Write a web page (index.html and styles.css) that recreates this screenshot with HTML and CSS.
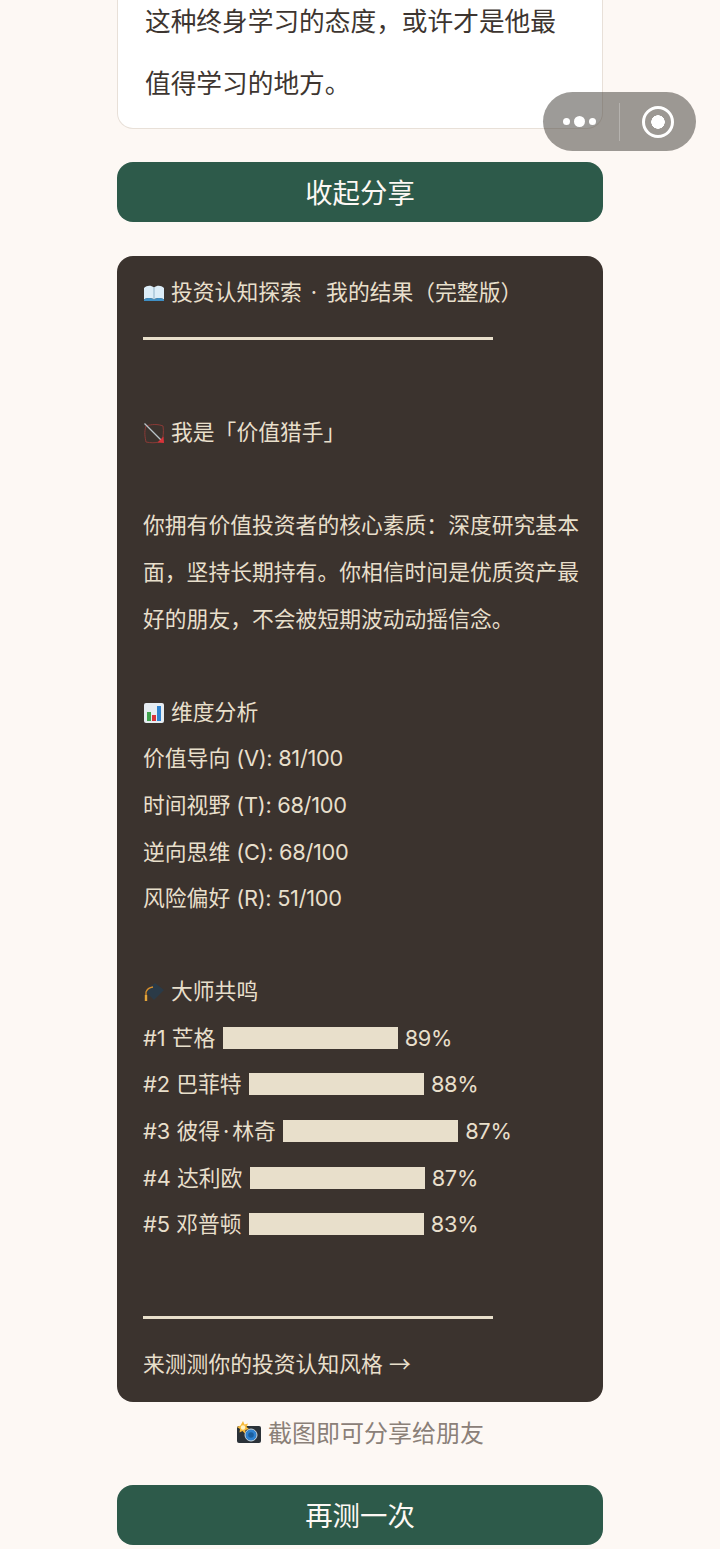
FILE: index.html
```html
<!DOCTYPE html>
<html lang="zh-CN">
<head>
<meta charset="utf-8">
<title>投资认知探索</title>
<link rel="stylesheet" href="styles.css">
</head>
<body>
<main class="page">
  <section class="article">
    <p>这种终身学习的态度&#xFF0C;或许才是他最</p>
    <p>值得学习的地方。</p>
  </section>
  <button class="btn btn-collapse">收起分享</button>
  <section class="result">
    <div class="line"><svg class="emoji" viewBox="0 0 22 22"><path d="M1 6C4 3 8 3 11 5.500 14 3 18 3 21 6V17.500C18 15.500 14 15.500 11 17.500 8 15.500 4 15.500 1 17.500Z" fill="#dcedf8"/><path d="M1 17.500C4 15.500 8 15.500 11 17.500 14 15.500 18 15.500 21 17.500V19H1Z" fill="#3f8fc4"/><path d="M11 5.500V17.500" stroke="#8fb3c9" stroke-width="1"/></svg>投资认知探索<span class="mid">·</span>我的结果&#xFF08;完整版&#xFF09;</div>
    <div class="line"><span class="rule"></span></div>
    <div class="line"></div>
    <div class="line"><svg class="emoji" viewBox="0 0 22 22"><path d="M3 4C9 2 15 2 20 4 21 10 20 15 19 19M3 4C1 10 2 15 3 20 8 21 12 21 16 20" fill="none" stroke="#8a3a36" stroke-width="1"/><path d="M1.500 1.500L18 18" stroke="#b9c4c9" stroke-width="1.300"/><path d="M14.500 20.500L21 21 20.500 14.500Z" fill="#d8343a"/></svg>我是「价值猎手」</div>
    <div class="line"></div>
    <div class="line">你拥有价值投资者的核心素质&#xFF1A;深度研究基本</div>
    <div class="line">面&#xFF0C;坚持长期持有。你相信时间是优质资产最</div>
    <div class="line">好的朋友&#xFF0C;不会被短期波动动摇信念。</div>
    <div class="line"></div>
    <div class="line"><svg class="emoji" viewBox="0 0 22 22"><rect x="1" y="1" width="20" height="20" rx="2" fill="#e6edf2"/><rect x="4" y="10" width="4" height="9" fill="#3fa34d"/><rect x="9" y="13" width="4" height="6" fill="#d8343a"/><rect x="14" y="4" width="4" height="15" fill="#2f83d0"/></svg>维度分析</div>
    <div class="line">价值导向 <span class="en">(V): 81/100</span></div>
    <div class="line">时间视野 <span class="en">(T): 68/100</span></div>
    <div class="line">逆向思维 <span class="en">(C): 68/100</span></div>
    <div class="line">风险偏好 <span class="en">(R): 51/100</span></div>
    <div class="line"></div>
    <div class="line"><svg class="emoji" viewBox="0 0 22 22"><path d="M12 2L21 9 11 19 2 10Z" fill="#2a3a47"/><path d="M3 20V11C4 8 7 6.500 10 6" fill="none" stroke="#d98f2b" stroke-width="1.300"/><rect x="1.800" y="14" width="2.400" height="6" fill="#e5a63a"/></svg>大师共鸣</div>
    <div class="line">#1 芒格 <span class="bar"></span> <span class="en">89%</span></div>
    <div class="line">#2 巴菲特 <span class="bar"></span> <span class="en">88%</span></div>
    <div class="line">#3 彼得<span class="mid-name">·</span>林奇 <span class="bar"></span> <span class="en">87%</span></div>
    <div class="line">#4 达利欧 <span class="bar"></span> <span class="en">87%</span></div>
    <div class="line">#5 邓普顿 <span class="bar"></span> <span class="en">83%</span></div>
    <div class="line"></div>
    <div class="line"><span class="rule"></span></div>
    <div class="line">来测测你的投资认知风格 <span class="arrow">→</span></div>
  </section>
  <p class="hint"><svg class="emoji-cam" viewBox="0 0 26 24"><rect x="1" y="5" width="24" height="17" rx="2" fill="#2b3238"/><circle cx="15" cy="14" r="6" fill="#2f83d0" stroke="#c9d3da" stroke-width="1"/><circle cx="15" cy="14" r="2.800" fill="#1b5f9e"/><path d="M7 0L8.500 3.500 12 2.500 10.500 6 13 8 9.500 9 9 12.500 6.500 10 3.500 11.500 4 8 1 6 4.500 4.500Z" fill="#f6b93b"/><circle cx="7" cy="6.500" r="2.200" fill="#fff3c4"/></svg>截图即可分享给朋友</p>
  <button class="btn btn-retry">再测一次</button>
</main>
<aside class="capsule">
  <span class="dots"><i class="dot"></i><i class="dot dot-mid"></i><i class="dot"></i></span>
  <span class="sep"></span>
  <span class="target"></span>
</aside>
</body>
</html>
```

FILE: styles.css
```css
* { box-sizing: border-box; }
html, body { margin: 0; padding: 0; }
body {
  height: 1549px;
  overflow: hidden;
  background: #fdf8f4;
  font-family: Inter, "Noto Sans CJK SC", sans-serif;
  position: relative;
}
.page {
  width: 486px;
  margin: -9px 0 0 117px;
}
.article {
  background: #fff;
  border: 1px solid #e8e0d8;
  border-top: 0;
  border-radius: 0 0 16px 16px;
  padding: 0 27px 14px;
  color: #3d3530;
  font-size: 25.7px;
  line-height: 62px;
  height: 138px;
}
.article p { margin: 0; white-space: nowrap; }
.btn {
  display: block;
  width: 100%;
  height: 60px;
  border: 0;
  border-radius: 16px;
  background: #2d5a4a;
  color: #fdf8f4;
  font-family: inherit;
  font-size: 27.4px;
  padding: 0 0 2px;
}
.btn-collapse { margin-top: 33px; }
.result {
  margin-top: 34px;
  height: 1146px;
  background: #3b332e;
  border-radius: 16px;
  padding: 13.4px 26px 0;
  color: #e8dfcb;
  font-size: 21.8px;
}
.line {
  height: 46.6px;
  line-height: 46.6px;
  white-space: nowrap;
  display: block;
}
.mid { padding: 0 9px; }
.mid-name { padding: 0 3px; }
.en { letter-spacing: -0.3px; }
.arrow { font-family: "Noto Sans", "Noto Sans CJK SC", sans-serif; }
.rule {
  display: block;
  width: 350px;
  height: 3px;
  background: #e8dfcb;
  position: relative;
  top: 21.5px;
}
.bar {
  display: inline-block;
  width: 175px;
  height: 22px;
  margin: 0 1px;
  background: #e8dfcb;
  vertical-align: -3px;
}
.emoji {
  display: inline-block;
  width: 22px;
  height: 22px;
  margin-right: 6px;
  vertical-align: -4px;
}
.hint {
  margin: 17px 0 0;
  height: 30px;
  line-height: 30px;
  text-align: center;
  color: #8b8078;
  font-size: 24px;
}
.emoji-cam {
  display: inline-block;
  width: 26px;
  height: 24px;
  margin-right: 6px;
  vertical-align: -3px;
}
.btn-retry { margin-top: 36px; }
.capsule {
  position: absolute;
  left: 543px;
  top: 92px;
  width: 153px;
  height: 59px;
  border-radius: 30px;
  background: rgba(60, 55, 50, 0.5);
  display: flex;
  align-items: center;
}
.dots {
  display: flex;
  align-items: center;
  gap: 4px;
  margin-left: 20px;
  width: 56px;
}
.dot {
  width: 7px;
  height: 7px;
  border-radius: 50%;
  background: #fff;
}
.dot-mid { width: 11px; height: 11px; }
.sep {
  width: 1px;
  height: 38px;
  background: rgba(255, 255, 255, 0.25);
}
.target {
  width: 32px;
  height: 32px;
  margin-left: 22px;
  border: 3.5px solid #fff;
  border-radius: 50%;
  background: radial-gradient(circle, #fff 0 6.500px, transparent 7px);
}
```
